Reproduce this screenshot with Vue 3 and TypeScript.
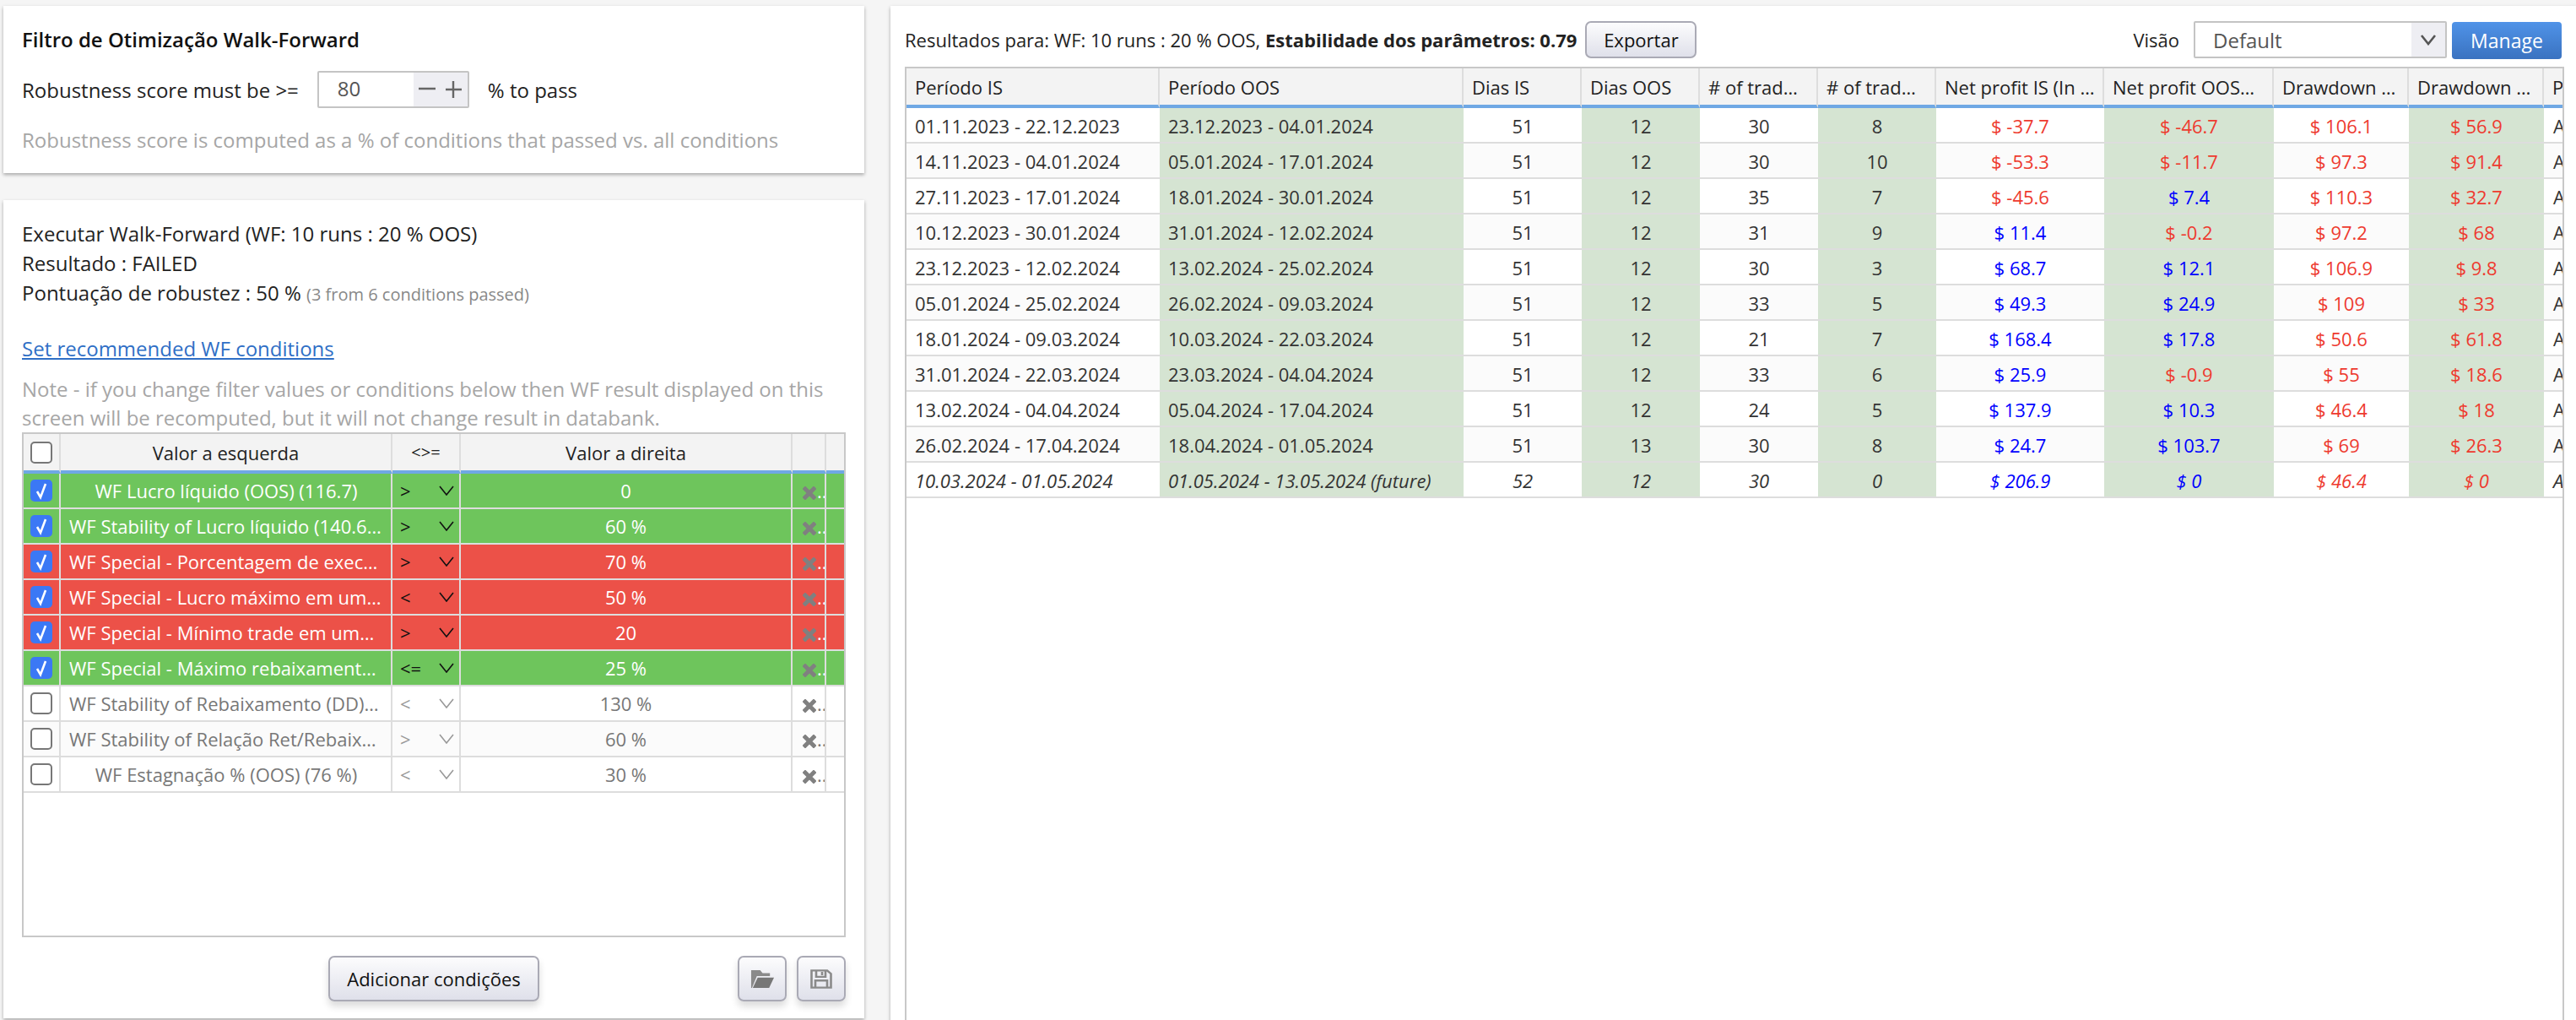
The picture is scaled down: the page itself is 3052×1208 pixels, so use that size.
<script setup lang="ts">
type Condition = { label: string; op: string; value: string; state: "pass" | "fail" | "off" };

const conditions: Condition[] = [
  { label: "WF Lucro líquido (OOS) (116.7)", op: ">", value: "0", state: "pass" },
  { label: "WF Stability of Lucro líquido (140.6 %)", op: ">", value: "60 %", state: "pass" },
  { label: "WF Special - Porcentagem de execuções", op: ">", value: "70 %", state: "fail" },
  { label: "WF Special - Lucro máximo em um dia", op: "<", value: "50 %", state: "fail" },
  { label: "WF Special - Mínimo trade em um…", op: ">", value: "20", state: "fail" },
  { label: "WF Special - Máximo rebaixamento diário", op: "<=", value: "25 %", state: "pass" },
  { label: "WF Stability of Rebaixamento (DD) (130 %)", op: "<", value: "130 %", state: "off" },
  { label: "WF Stability of Relação Ret/Rebaixamento", op: ">", value: "60 %", state: "off" },
  { label: "WF Estagnação % (OOS) (76 %)", op: "<", value: "30 %", state: "off" },
];

const headers = [
  "Período IS",
  "Período OOS",
  "Dias IS",
  "Dias OOS",
  "# of trades IS",
  "# of trades OOS",
  "Net profit IS (In sample)",
  "Net profit OOS (Out of sample)",
  "Drawdown IS (In sample)",
  "Drawdown OOS (Out of sample)",
  "P",
];

type Run = [string, string, number, number, number, number, number, number, number, number];

const runs: Run[] = [
  ["01.11.2023 - 22.12.2023", "23.12.2023 - 04.01.2024", 51, 12, 30, 8, -37.7, -46.7, 106.1, 56.9],
  ["14.11.2023 - 04.01.2024", "05.01.2024 - 17.01.2024", 51, 12, 30, 10, -53.3, -11.7, 97.3, 91.4],
  ["27.11.2023 - 17.01.2024", "18.01.2024 - 30.01.2024", 51, 12, 35, 7, -45.6, 7.4, 110.3, 32.7],
  ["10.12.2023 - 30.01.2024", "31.01.2024 - 12.02.2024", 51, 12, 31, 9, 11.4, -0.2, 97.2, 68],
  ["23.12.2023 - 12.02.2024", "13.02.2024 - 25.02.2024", 51, 12, 30, 3, 68.7, 12.1, 106.9, 9.8],
  ["05.01.2024 - 25.02.2024", "26.02.2024 - 09.03.2024", 51, 12, 33, 5, 49.3, 24.9, 109, 33],
  ["18.01.2024 - 09.03.2024", "10.03.2024 - 22.03.2024", 51, 12, 21, 7, 168.4, 17.8, 50.6, 61.8],
  ["31.01.2024 - 22.03.2024", "23.03.2024 - 04.04.2024", 51, 12, 33, 6, 25.9, -0.9, 55, 18.6],
  ["13.02.2024 - 04.04.2024", "05.04.2024 - 17.04.2024", 51, 12, 24, 5, 137.9, 10.3, 46.4, 18],
  ["26.02.2024 - 17.04.2024", "18.04.2024 - 01.05.2024", 51, 13, 30, 8, 24.7, 103.7, 69, 26.3],
  ["10.03.2024 - 01.05.2024", "01.05.2024 - 13.05.2024 (future)", 52, 12, 30, 0, 206.9, 0, 46.4, 0],
];

function profitClass(v: number) {
  return v < 0 ? "neg" : "pos";
}
</script>

<template>
  <main class="page">
    <section class="left">
      <div class="card filter-card">
        <div class="title">Filtro de Otimização Walk-Forward</div>
        <div class="score-row">
          <span>Robustness score must be &gt;=</span>
          <div class="stepper">
            <span class="stepper-value">80</span>
            <span class="stepper-btns">
              <svg width="58" height="30" viewBox="0 0 58 30">
                <path d="M4 14H24M45 5V25M36 15H55" stroke="#666" stroke-width="2.4" fill="none" />
              </svg>
            </span>
          </div>
          <span>% to pass</span>
        </div>
        <div class="hint">Robustness score is computed as a % of conditions that passed vs. all conditions</div>
      </div>

      <div class="card wf-card">
        <div class="summary">
          <div>Executar Walk-Forward (WF: 10 runs : 20 % OOS)</div>
          <div>Resultado : FAILED</div>
          <div>Pontuação de robustez : 50 % <small>(3 from 6 conditions passed)</small></div>
        </div>
        <a class="link">Set recommended WF conditions</a>
        <div class="note">
          Note - if you change filter values or conditions below then WF result displayed on this screen will be
          recomputed, but it will not change result in databank.
        </div>

        <div class="table-box cond-box">
          <table class="cond">
            <colgroup>
              <col style="width: 44px" />
              <col style="width: 393px" />
              <col style="width: 81px" />
              <col style="width: 393px" />
              <col style="width: 40px" />
              <col style="width: 21px" />
            </colgroup>
            <thead>
              <tr>
                <th><span class="check"></span></th>
                <th>Valor a esquerda</th>
                <th class="op-head">&lt;&gt;=</th>
                <th>Valor a direita</th>
                <th></th>
                <th></th>
              </tr>
            </thead>
            <tbody>
              <tr v-for="c in conditions" :key="c.label" :class="c.state">
                <td>
                  <span class="check" :class="{ on: c.state !== 'off' }">
                    <svg v-if="c.state !== 'off'" width="26" height="26" viewBox="0 0 26 26">
                      <path d="M8 14L12 21L18 5" stroke="#fff" stroke-width="2.6" fill="none" />
                    </svg>
                  </span>
                </td>
                <td class="ellipsis" :class="{ long: c.label.length > 30 }">{{ c.label }}</td>
                <td>
                  <div class="op">
                    <span>{{ c.op }}</span>
                    <svg width="18" height="12" viewBox="0 0 18 12">
                      <path d="M1 1L9 11L17 1" stroke="currentColor" stroke-width="1.6" fill="none" />
                    </svg>
                  </div>
                </td>
                <td>{{ c.value }}</td>
                <td class="remove">
                  <svg width="16" height="16" viewBox="0 0 16 16">
                    <path
                      d="M3 3L13 13M13 3L3 13"
                      stroke="#808080"
                      stroke-width="5"
                      stroke-linecap="square"
                      fill="none"
                    />
                  </svg><span class="dots">..</span>
                </td>
                <td></td>
              </tr>
            </tbody>
          </table>
        </div>

        <div class="actions">
          <span></span>
          <button class="btn add-btn">Adicionar condições</button>
          <div class="icon-btns">
            <button class="btn icon-btn">
              <svg width="29" height="23" viewBox="0 0 30 26" preserveAspectRatio="none">
                <path d="M1 1H12L15 5H24V9H8L2 25H1Z" fill="#8a8a8a" />
                <path d="M9 11H29L23 25H3Z" fill="#777" />
              </svg>
            </button>
            <button class="btn icon-btn">
              <svg width="26" height="23" viewBox="0 0 26 26" preserveAspectRatio="none">
                <path
                  d="M2 1.5H20L24.5 6V24.5H1.5V1.5ZM7 2V10H18V2M14 3.5V8M6 24V15H20V24"
                  stroke="#8a8a8a"
                  stroke-width="2.6"
                  fill="none"
                />
              </svg>
            </button>
          </div>
        </div>
      </div>
    </section>

    <section class="card results">
      <div class="toolbar">
        <span>Resultados para: WF: 10 runs : 20 % OOS, <b>Estabilidade dos parâmetros: 0.79</b></span>
        <button class="btn export-btn">Exportar</button>
        <span class="view-label">Visão</span>
        <div class="view-select">
          <span class="view-value">Default</span>
          <span class="view-arrow">
            <svg width="20" height="14" viewBox="0 0 20 14">
              <path d="M2 2L10 12L18 2" stroke="#555" stroke-width="2.6" fill="none" />
            </svg>
          </span>
        </div>
        <button class="manage-btn">Manage</button>
      </div>

      <div class="table-box runs-box">
        <table class="runs">
          <colgroup>
            <col style="width: 300px" />
            <col style="width: 360px" />
            <col style="width: 140px" />
            <col style="width: 140px" />
            <col style="width: 140px" />
            <col style="width: 140px" />
            <col style="width: 199px" />
            <col style="width: 201px" />
            <col style="width: 160px" />
            <col style="width: 160px" />
            <col style="width: 22px" />
          </colgroup>
          <thead>
            <tr>
              <th v-for="h in headers" :key="h" class="ellipsis">{{ h }}</th>
            </tr>
          </thead>
          <tbody>
            <tr v-for="(r, i) in runs" :key="r[0]" :class="{ future: i === runs.length - 1 }">
              <td class="text-left">{{ r[0] }}</td>
              <td class="text-left oos">{{ r[1] }}</td>
              <td>{{ r[2] }}</td>
              <td class="oos">{{ r[3] }}</td>
              <td>{{ r[4] }}</td>
              <td class="oos">{{ r[5] }}</td>
              <td :class="profitClass(r[6])">$ {{ r[6] }}</td>
              <td class="oos" :class="profitClass(r[7])">$ {{ r[7] }}</td>
              <td class="neg">$ {{ r[8] }}</td>
              <td class="oos neg">$ {{ r[9] }}</td>
              <td class="clip">A</td>
            </tr>
          </tbody>
        </table>
      </div>
    </section>
  </main>
</template>

<style scoped>
.page {
  display: flex;
  gap: 31px;
  height: 1208px;
  padding: 7px 0 0 4px;
  box-sizing: border-box;
  overflow: hidden;
  font-family: "Open Sans", sans-serif;
  font-size: 24px;
  line-height: 35px;
  color: #222;
}
.left {
  display: flex;
  flex-direction: column;
  gap: 32px;
  width: 1020px;
  flex: none;
}
.card {
  background: #fff;
  box-shadow: 0 2px 4px rgba(0, 0, 0, 0.32);
  box-sizing: border-box;
}
.filter-card {
  height: 198px;
  padding: 22px 22px 0;
}
.title {
  font-weight: 600;
  color: #111;
}
.score-row {
  display: flex;
  align-items: center;
  gap: 22px;
  height: 44px;
  margin-top: 20px;
}
.stepper {
  display: flex;
  width: 180px;
  height: 44px;
  box-sizing: border-box;
  border: 2px solid #c4c4c4;
  border-radius: 2px;
}
.stepper-value {
  flex: 1;
  padding-left: 22px;
  color: #555;
  line-height: 38px;
}
.stepper-btns {
  display: flex;
  align-items: center;
  width: 64px;
  background: #eeeef3;
  padding-left: 2px;
  box-sizing: border-box;
}
.hint {
  margin-top: 20px;
  color: #a6a6a6;
}
.wf-card {
  height: 969px;
  padding: 22px 22px 0;
}
.summary small {
  font-size: 20px;
  line-height: 1;
  color: #888;
}
.link {
  display: block;
  margin-top: 31px;
  color: #2f6fc6;
  text-decoration: underline;
}
.note {
  margin-top: 14px;
  line-height: 34px;
  color: #a6a6a6;
}
.table-box {
  border: 2px solid #c8c8c8;
  box-sizing: border-box;
  overflow: hidden;
  background: #fff;
}
.cond-box {
  width: 976px;
  height: 598px;
}
table {
  border-collapse: separate;
  border-spacing: 0;
  table-layout: fixed;
  font-size: 22px;
  line-height: 30px;
}
th {
  height: 47px;
  padding: 0;
  box-sizing: border-box;
  background: #f3f3f3;
  border-right: 2px solid #ddd;
  border-bottom: 4px solid #6fa8e4;
  font-weight: 400;
  color: #222;
}
td {
  height: 42px;
  padding: 0;
  box-sizing: border-box;
  border-bottom: 2px solid #ddd;
  text-align: center;
}
.ellipsis {
  overflow: hidden;
  white-space: nowrap;
  text-overflow: ellipsis;
}
.cond {
  width: 972px;
}
.cond td {
  border-right: 2px solid #ddd;
}
.cond th:last-child,
.cond td:last-child {
  border-right: none;
}
.cond td.ellipsis {
  padding: 0 9px 0 10px;
}
.cond td.long {
  text-align: left;
}
.op-head {
  font-size: 20px;
}
.pass td {
  background: #6ec55c;
  color: #fff;
}
.fail td {
  background: #ec5148;
  color: #fff;
}
.off td {
  color: #777;
}
.off:nth-child(even) td {
  background: #fbfbfb;
}
.check {
  display: block;
  width: 26px;
  height: 26px;
  margin: 0 auto;
  box-sizing: border-box;
  border: 2px solid #777;
  border-radius: 5px;
  background: #fff;
}
.check.on {
  border: none;
  background: #3b78f5;
}
.op {
  display: flex;
  justify-content: space-between;
  align-items: center;
  padding: 0 6px 0 9px;
  color: #111;
}
.off .op {
  color: #999;
}
.remove {
  text-align: left;
  overflow: hidden;
  white-space: nowrap;
  padding-left: 12px !important;
}
.remove svg {
  vertical-align: -2px;
}
.dots {
  margin-left: 1px;
}
.actions {
  display: grid;
  grid-template-columns: 1fr auto 1fr;
  align-items: center;
  width: 976px;
  margin-top: 22px;
}
.icon-btns {
  display: flex;
  justify-content: flex-end;
  gap: 12px;
}
.btn {
  box-sizing: border-box;
  border: 2px solid #aaaab5;
  border-radius: 7px;
  background: linear-gradient(#fcfcfd, #dfe0ea);
  font-family: inherit;
  font-size: 22px;
  color: #111;
  padding: 0;
}
.add-btn,
.icon-btn {
  height: 54px;
  box-shadow: 0 6px 8px rgba(0, 0, 0, 0.14);
}
.add-btn {
  width: 250px;
}
.icon-btn {
  display: flex;
  align-items: center;
  justify-content: center;
  width: 58px;
}
.results {
  display: flex;
  flex-direction: column;
  flex: 1;
  height: 1210px;
  padding: 18px 15px 0 17px;
}
.toolbar {
  display: flex;
  align-items: center;
  height: 44px;
  margin-bottom: 10px;
  font-size: 22px;
}
.toolbar b {
  font-weight: 700;
}
.export-btn {
  width: 132px;
  height: 44px;
  margin-left: 10px;
}
.view-label {
  margin-left: auto;
  font-size: 22px;
}
.view-select {
  display: flex;
  width: 300px;
  height: 44px;
  margin-left: 17px;
  box-sizing: border-box;
  border: 2px solid #c4c4c4;
  border-radius: 2px;
}
.view-value {
  flex: 1;
  padding-left: 21px;
  font-size: 24px;
  line-height: 42px;
  color: #555;
}
.view-arrow {
  display: flex;
  align-items: center;
  justify-content: center;
  width: 40px;
  background: #eeeef3;
}
.manage-btn {
  width: 130px;
  height: 44px;
  margin: 1px 3px 0 6px;
  border: none;
  border-radius: 4px;
  background: linear-gradient(#5093e8, #3a72c0);
  color: #fff;
  font-family: inherit;
  font-size: 23px;
  padding: 0;
}
.runs-box {
  flex: 1;
  width: 1966px;
}
.runs {
  width: 1962px;
}
.runs th {
  text-align: left;
  padding: 0 8px 0 10px;
}
.runs th:nth-child(5),
.runs th:nth-child(6),
.runs th:nth-child(8) {
  padding-right: 16px;
}
.runs th:last-child {
  border-right: none;
}
.runs td {
  color: #333;
  padding-top: 2px;
}
.runs tbody tr:nth-child(even) td {
  background: #fbfbfb;
}
.runs tbody tr td.oos {
  background: #d5e4d2;
}
.runs td.text-left {
  text-align: left;
  padding-left: 10px;
}
.runs td.neg {
  color: #ee3a2f;
}
.runs td.pos {
  color: #0000ff;
}
.runs td.clip {
  text-align: left;
  padding-left: 11px;
  overflow: hidden;
}
.future td {
  font-style: italic;
}
</style>

<style>
html,
body {
  background: #f5f5f5;
}
</style>
